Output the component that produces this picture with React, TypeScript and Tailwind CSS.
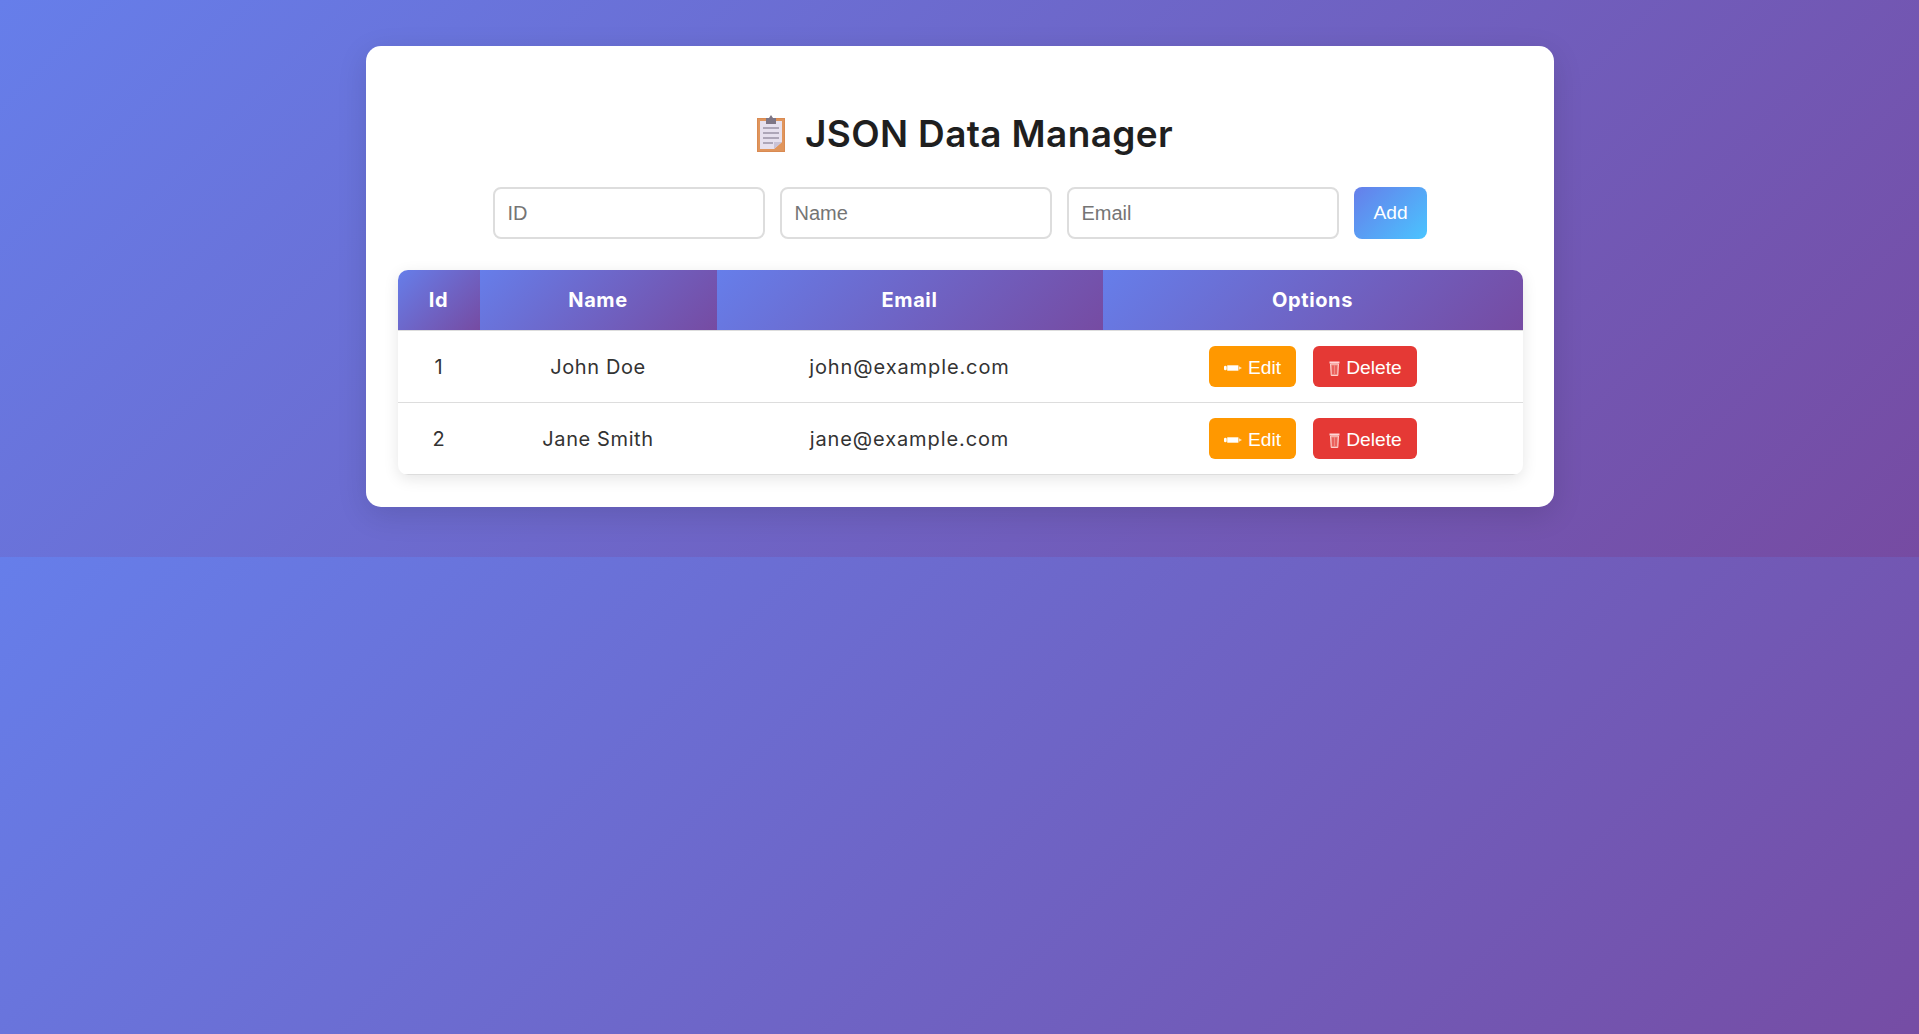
const rows = [
  { id: 1, name: "John Doe", email: "john@example.com" },
  { id: 2, name: "Jane Smith", email: "jane@example.com" },
]

const headGradient = "bg-[linear-gradient(135deg,#667eea,#764ba2)] border-b border-[#ddd]"
const inputClass =
  "h-[52px] w-[272px] rounded-[8px] border-2 border-[#ddd] px-[12.5px] text-[20px] outline-none placeholder:text-[#757575]"

function Clipboard() {
  return (
    <svg viewBox="0 0 28 37" className="h-[37px] w-[28px]">
      <rect x="0.5" y="3.5" width="27" height="33" fill="#e0955c" stroke="#d98a52" />
      <path d="M3 6h22v21l-8 7H3z" fill="#e6e0ee" />
      <path d="M25 27l-8 7v-7z" fill="#c9c2d6" />
      <path d="M9 3h3l2-3 2 3h3v6H9z" fill="#7d7585" />
      <path d="M6 13h16M6 18h16M6 23h16M6 28h10" stroke="#9a93a6" strokeWidth="1.4" />
    </svg>
  )
}

function PencilIcon() {
  return (
    <svg viewBox="0 0 20 6" className="h-[6px] w-[18px]">
      <rect x="0" y="0.5" width="3" height="5" rx="1.5" fill="#fff" />
      <rect x="3.6" y="0" width="12.4" height="6" fill="#fff" />
      <path d="M16.5 1l3.5 2-3.5 2z" fill="#ffe2b8" />
    </svg>
  )
}

function TrashIcon() {
  return (
    <svg viewBox="0 0 11 15" className="h-[15px] w-[11px]">
      <rect x="0.5" y="0.5" width="10" height="2" fill="#ffd6d6" />
      <path d="M1.5 3h8l-.7 11.5H2.2z" fill="#f08a84" stroke="#ffdcd8" strokeWidth="0.9" />
      <path d="M4 4.5v8.5M7 4.5v8.5" stroke="#e53935" strokeWidth="1" />
    </svg>
  )
}

export default function App() {
  return (
    <div className="min-h-[1034px] bg-[linear-gradient(135deg,#667eea,#764ba2)] bg-[size:100%_557px] pt-[46px] font-['Liberation_Sans',sans-serif]">
      <div className="mx-auto w-[1188px] rounded-[15px] bg-white pb-[32px] pl-[32px] pr-[31px] pt-[65px] shadow-[0_8px_30px_rgba(0,0,0,0.12)]">
        <h1 className="mb-[31px] flex h-[45px] items-center justify-center gap-[20px] pl-[10px] font-['Inter',sans-serif] text-[37px] font-semibold tracking-[0.35px] text-[#1f1f1f]">
          <Clipboard />
          JSON Data Manager
        </h1>

        <div className="mb-[31px] flex justify-center gap-[15px]">
          <input placeholder="ID" className={inputClass} />
          <input placeholder="Name" className={inputClass} />
          <input placeholder="Email" className={inputClass} />
          <button className="h-[52px] w-[73px] rounded-[8px] bg-[linear-gradient(135deg,#667eea,#4ac4ff)] text-[19.2px] text-white">Add</button>
        </div>

        <table className="w-full border-separate border-spacing-0 overflow-hidden rounded-[10px] font-['Inter',sans-serif] shadow-[0_4px_15px_rgba(0,0,0,0.1)]">
          <thead>
            <tr className="h-[61px] text-[20px] font-bold tracking-[0.6px] text-white">
              <th className={`w-[82px] ${headGradient}`}>Id</th>
              <th className={`w-[237px] ${headGradient}`}>Name</th>
              <th className={`w-[386px] ${headGradient}`}>Email</th>
              <th className={headGradient}>Options</th>
            </tr>
          </thead>
          <tbody>
            {rows.map((row) => (
              <tr key={row.id} className="h-[72px] text-center text-[20px] text-[#333]">
                <td className="border-b border-[#ddd]">{row.id}</td>
                <td className="border-b border-[#ddd] tracking-[0.6px]">{row.name}</td>
                <td className="border-b border-[#ddd] tracking-[0.9px]">{row.email}</td>
                <td className="border-b border-[#ddd]">
                  <div className="flex justify-center gap-[17px] font-['Liberation_Sans',sans-serif] text-[19.2px] text-white">
                    <button className="flex h-[41px] w-[87px] items-center justify-center gap-[6px] rounded-[6px] bg-[#ff9800] pl-[1px] pt-[3px]">
                      <PencilIcon />
                      Edit
                    </button>
                    <button className="flex h-[41px] w-[104px] items-center justify-center gap-[6px] rounded-[6px] bg-[#e53935] pl-[2px] pt-[3px]">
                      <TrashIcon />
                      Delete
                    </button>
                  </div>
                </td>
              </tr>
            ))}
          </tbody>
        </table>
      </div>
    </div>
  )
}
